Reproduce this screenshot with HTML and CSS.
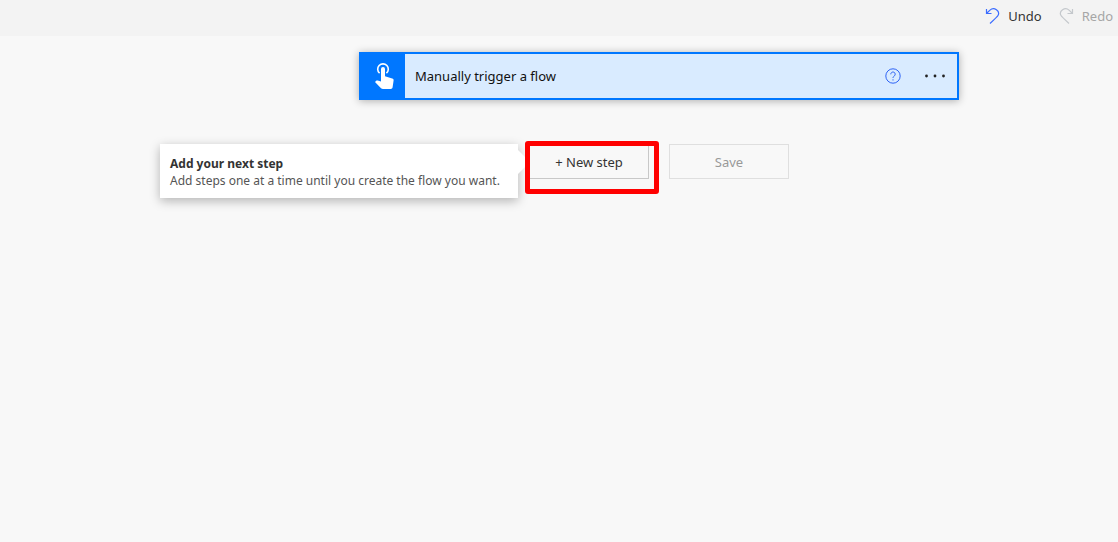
FILE: index.html
```html
<!DOCTYPE html>
<html lang="en">
<head>
<meta charset="utf-8">
<title>Flow designer</title>
<link rel="stylesheet" href="styles.css">
</head>
<body>
<header class="toolbar">
  <button class="command" type="button">
    <svg class="command-icon" viewBox="0 0 16 18" aria-hidden="true"><path d="M1.500 2v4.500h5M1.700 6.300 5 3.100C9-.5 15.500 4 13 8.500Q12.500 9.500 5 16.500"/></svg>
    Undo
  </button>
  <button class="command" type="button" disabled>
    <svg class="command-icon" viewBox="0 0 16 18" aria-hidden="true"><path d="M13.500 2v4.500h-5M13.300 6.300 10 3.100C6-.5-.5 4 2 8.500Q2.500 9.500 10 16.500"/></svg>
    Redo
  </button>
</header>
<main class="canvas">
  <section class="card">
    <div class="card-icon">
      <svg viewBox="0 0 24 28" aria-hidden="true"><path fill="none" stroke="#fff" stroke-width="1.600" d="M6.600 11.200a5.300 5.300 0 1 1 6.800 0"/><path fill="#fff" d="M8 7a2 2 0 0 1 4 0v7.300l7.200 2.200c1.100.4 1.600 1 1.400 2.100l-1 6.700c-.2 1.200-.8 1.700-1.900 1.700H10c-.8 0-1.400-.3-2-.8l-6-6.200 1-1c.5-.5 1-.6 1.700-.4L8 19.400z"/></svg>
    </div>
    <h1 class="card-title">Manually trigger a flow</h1>
    <button class="icon-button" type="button" aria-label="Help">
      <svg class="help-icon" viewBox="0 0 16 16" aria-hidden="true"><circle cx="8" cy="8" r="7.200"/><path d="M5.800 6.300a2.200 2.200 0 1 1 3.700 1.500C8.700 8.500 8 8.800 8 10M8 11.300v1.200"/></svg>
    </button>
    <button class="icon-button" type="button" aria-label="More commands">
      <svg class="more-icon" viewBox="0 0 22 4" aria-hidden="true"><circle cx="2.500" cy="2" r="1.400"/><circle cx="11" cy="2" r="1.400"/><circle cx="19.500" cy="2" r="1.400"/></svg>
    </button>
  </section>
  <div class="actions">
    <div class="new-step">
      <button class="action" type="button">+ New step</button>
      <aside class="callout">
        <h2 class="callout-title">Add your next step</h2>
        <p class="callout-text">Add steps one at a time until you create the flow you want.</p>
      </aside>
      <div class="highlight"></div>
    </div>
    <button class="action" type="button" disabled>Save</button>
  </div>
</main>
</body>
</html>
```
FILE: styles.css
```css
* {
  box-sizing: border-box;
}

body {
  margin: 0;
  min-height: 100vh;
  background: #f8f8f8;
  color: #222;
  font-family: "Segoe UI", "Noto Sans", "Open Sans", sans-serif;
  font-size: 13px;
}

button {
  margin: 0;
  padding: 0;
  border: 0;
  background: none;
  color: inherit;
  font: inherit;
}

h1, h2, p {
  margin: 0;
}

.toolbar {
  display: flex;
  justify-content: flex-end;
  gap: 17px;
  height: 36px;
  padding: 0 5px 4px;
  background: #f3f3f3;
}

.command {
  display: flex;
  align-items: center;
  gap: 7px;
  color: #333;
}

.command:disabled {
  color: #a6a6a6;
}

.command-icon {
  width: 16px;
  height: 18px;
  fill: none;
  stroke: #3b6cff;
  stroke-width: 1.2;
}

.command:disabled .command-icon {
  stroke: #c4c8cc;
}

.canvas {
  display: flex;
  flex-direction: column;
  align-items: center;
  gap: 44px;
  padding: 16px 0 0 200px;
}

.card {
  display: flex;
  align-items: center;
  width: 100%;
  max-width: 600px;
  height: 48px;
  padding-right: 1px;
  border: 2px solid #0077ff;
  background: #d9ebff;
  box-shadow: 0 1px 8px rgba(0, 0, 0, 0.3);
}

.card-icon {
  display: flex;
  align-items: center;
  justify-content: center;
  align-self: stretch;
  width: 44px;
  padding-left: 4px;
  background: #0077ff;
}

.card-icon svg {
  width: 24px;
  height: 28px;
}

.card-title {
  flex: 1;
  padding-left: 10px;
  color: #111;
  font-size: 13px;
  font-weight: 400;
}

.icon-button {
  display: flex;
  align-items: center;
  justify-content: center;
  width: 42px;
  height: 44px;
}

.help-icon {
  width: 16px;
  height: 16px;
  fill: none;
  stroke: #2f64f5;
  stroke-width: 1;
}

.more-icon {
  width: 22px;
  height: 4px;
  fill: #222;
}

.actions {
  display: flex;
  gap: 20px;
}

.new-step {
  position: relative;
}

.action {
  width: 120px;
  height: 35px;
  border: 1px solid #c8c8c8;
  color: #333;
}

.action:disabled {
  border-color: #dfdfdf;
  color: #999;
}

.callout {
  position: absolute;
  top: 0;
  right: 131px;
  min-width: 358px;
  padding: 11px 10px 9px;
  background: #fff;
  box-shadow: 0 3px 10px rgba(0, 0, 0, 0.28);
  color: #333;
  font-size: 12px;
  line-height: 17px;
  white-space: nowrap;
}

.callout::after {
  content: "";
  position: absolute;
  top: 6px;
  left: 100%;
  border: 12px solid transparent;
  border-right-width: 0;
  border-left-color: #fff;
}

.callout-title {
  font-size: 12px;
  font-weight: 700;
}

.callout-text {
  color: #555;
}

.highlight {
  position: absolute;
  inset: -3px -10px -15px -4px;
  border: 5px solid #f00;
  border-radius: 3px;
  pointer-events: none;
}
```
